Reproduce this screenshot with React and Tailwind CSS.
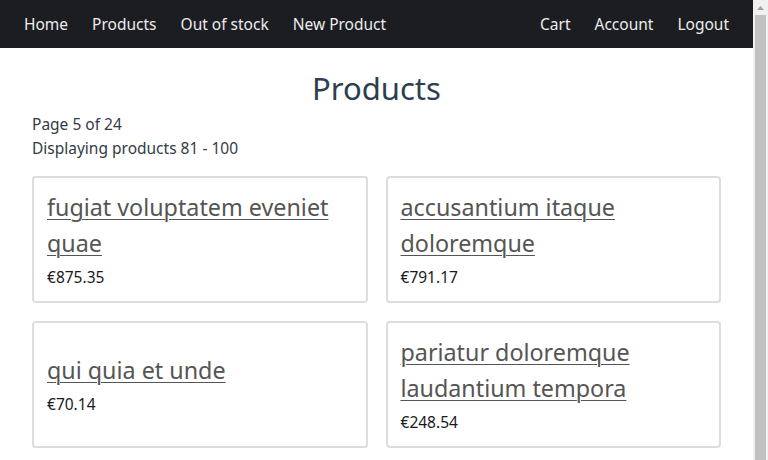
const products = [
  { name: 'fugiat voluptatem eveniet quae', price: '875.35' },
  { name: 'accusantium itaque doloremque', price: '791.17' },
  { name: 'qui quia et unde', price: '70.14' },
  { name: 'pariatur doloremque laudantium tempora', price: '248.54' },
];

const NavLink = ({ children }) => (
  <a href="#" className="px-3 text-[15.5px] leading-6 text-[#ececec] no-underline">
    {children}
  </a>
);

const ProductCard = ({ name, price }) => (
  <div className="flex min-h-[127px] flex-col justify-center rounded-[4px] border-2 border-[#dddddd] bg-white px-[13px] pt-[10px] pb-3">
    <a href="#" className="text-[23.3px] leading-9 text-[#555555] underline decoration-1 underline-offset-[3px]">
      {name}
    </a>
    <p className="mt-1 text-[15.5px] leading-6 text-[#1a1a1a]">€{price}</p>
  </div>
);

// static scrollbar strip, as in the screenshot
const ScrollBar = () => (
  <div className="flex w-[15px] shrink-0 flex-col bg-[#f1f1f1]">
    <div className="flex h-[15px] items-center justify-center">
      <svg width="7" height="4" viewBox="0 0 7 4">
        <path d="M0 4 L3.5 0 L7 4 Z" fill="#a3a3a3" />
      </svg>
    </div>
    <div className="mx-[2px] flex-1 bg-[#c1c1c1]" />
  </div>
);

export default function App() {
  return (
    <div className="flex h-screen overflow-hidden bg-white font-['Noto_Sans',sans-serif]">
      <div className="min-w-0 flex-1">
        <nav className="flex h-12 items-center justify-between bg-[#1c1d21] px-3">
          <div className="flex items-center">
            <NavLink>Home</NavLink>
            <NavLink>Products</NavLink>
            <NavLink>Out of stock</NavLink>
            <NavLink>New Product</NavLink>
          </div>
          <div className="flex items-center">
            <NavLink>Cart</NavLink>
            <NavLink>Account</NavLink>
            <NavLink>Logout</NavLink>
          </div>
        </nav>

        <main className="px-8 pb-8">
          <h1 className="mt-4 text-center text-[31px] leading-12 text-[#2c3e50]">Products</h1>
          <p className="text-[15.5px] leading-6 text-[#333b45]">Page 5 of 24</p>
          <p className="text-[15.5px] leading-6 text-[#333b45]">Displaying products 81 - 100</p>

          <div className="mt-4 grid grid-cols-2 gap-[18px]">
            {products.map((p) => (
              <ProductCard key={p.name} name={p.name} price={p.price} />
            ))}
          </div>
        </main>
      </div>
      <ScrollBar />
    </div>
  );
}
